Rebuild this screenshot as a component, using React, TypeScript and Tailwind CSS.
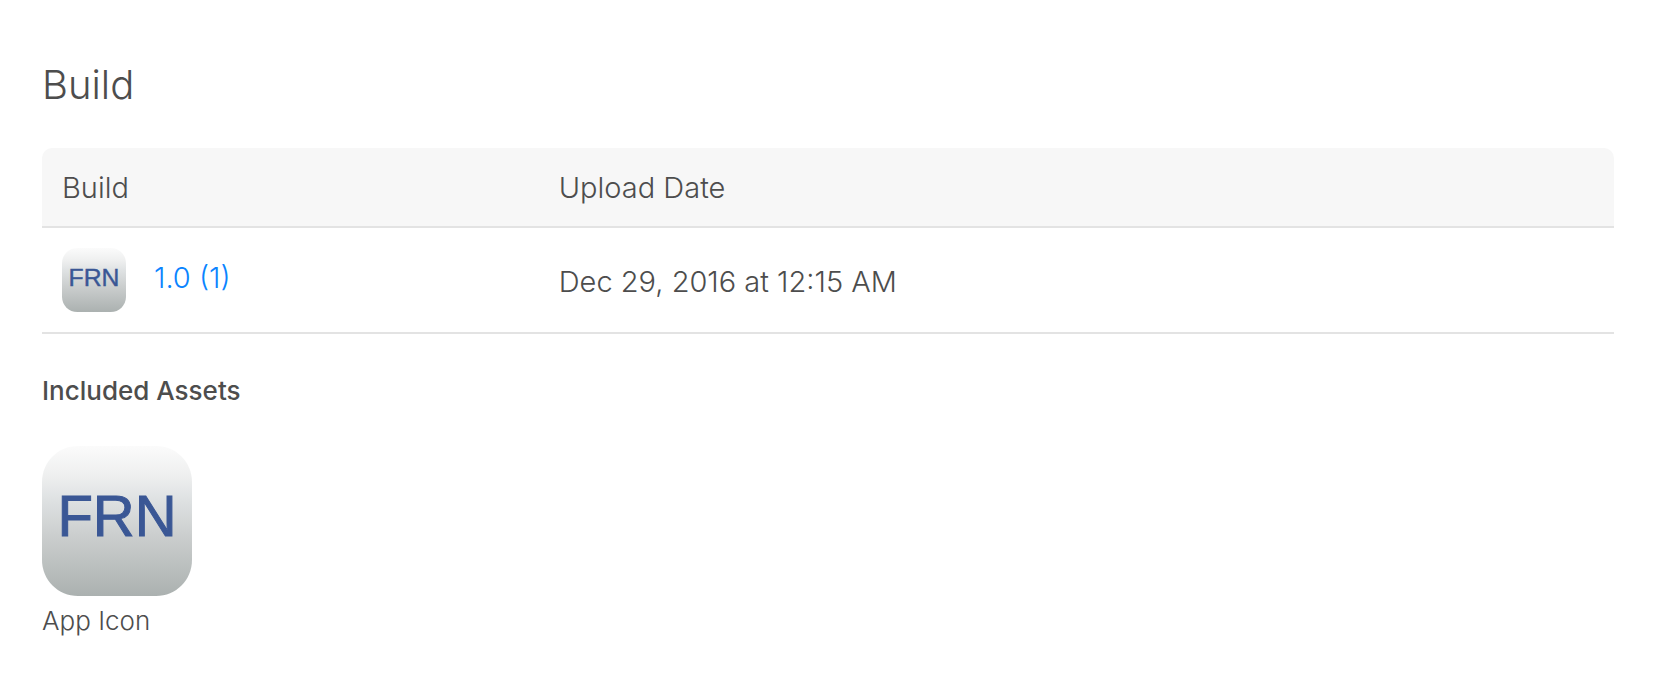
import { useId } from "react";

function AppIcon({ className }: { className: string }) {
  const id = useId();
  return (
    <svg viewBox="0 0 150 150" className={className} role="img" aria-label="FRN app icon">
      <defs>
        <linearGradient id={id} x1="0" y1="0" x2="0" y2="1">
          <stop offset="0" stopColor="#fbfbfb" />
          <stop offset="0.2" stopColor="#eeefef" />
          <stop offset="0.35" stopColor="#dfe2e3" />
          <stop offset="0.6" stopColor="#cbcece" />
          <stop offset="1" stopColor="#abb1b0" />
        </linearGradient>
      </defs>
      <path
        d="M36 0H114C134 0 150 16 150 36V114C150 134 134 150 114 150H36C16 150 0 134 0 114V36C0 16 16 0 36 0Z"
        fill={`url(#${id})`}
      />
      <text
        x="75"
        y="90"
        textAnchor="middle"
        fontSize="58"
        className="fill-[#3a5795] stroke-[#3a5795] stroke-1 font-['Liberation_Sans',Arial,sans-serif]"
      >
        FRN
      </text>
    </svg>
  );
}

const builds = [{ version: "1.0 (1)", uploaded: "Dec 29, 2016 at 12:15 AM" }];

export default function App() {
  return (
    <main className="bg-white pt-16 pr-14 pb-10 pl-[42px] font-['Inter',sans-serif] font-light text-[#4d4d4d]">
      <h1 className="text-[40px] leading-[42px]">Build</h1>

      <table className="mt-[42px] w-full table-fixed border-separate border-spacing-0 text-left text-[29px] leading-10">
        <thead>
          <tr>
            <th className="h-20 w-[31.6%] rounded-tl-[10px] border-b-2 border-[#e3e3e3] bg-[#f7f7f7] pt-[2px] pl-5 font-light">
              Build
            </th>
            <th className="rounded-tr-[10px] border-b-2 border-[#e3e3e3] bg-[#f7f7f7] pt-[2px] pl-5 font-light">
              Upload Date
            </th>
          </tr>
        </thead>
        <tbody>
          {builds.map((build) => (
            <tr key={build.version}>
              <td className="border-b-2 border-[#e3e3e3] py-5 pl-5">
                <div className="flex gap-7">
                  <AppIcon className="size-16" />
                  <a href="#build" className="pt-[10px] text-[#0a84ff]">
                    {build.version}
                  </a>
                </div>
              </td>
              <td className="border-b-2 border-[#e3e3e3] pt-1 pl-5">{build.uploaded}</td>
            </tr>
          ))}
        </tbody>
      </table>

      <h2 className="mt-10 text-[26px] leading-[34px] font-medium">Included Assets</h2>
      <figure className="mt-[38px] w-fit">
        <AppIcon className="size-[150px]" />
        <figcaption className="mt-2 text-[26px] leading-[34px]">App Icon</figcaption>
      </figure>
    </main>
  );
}
